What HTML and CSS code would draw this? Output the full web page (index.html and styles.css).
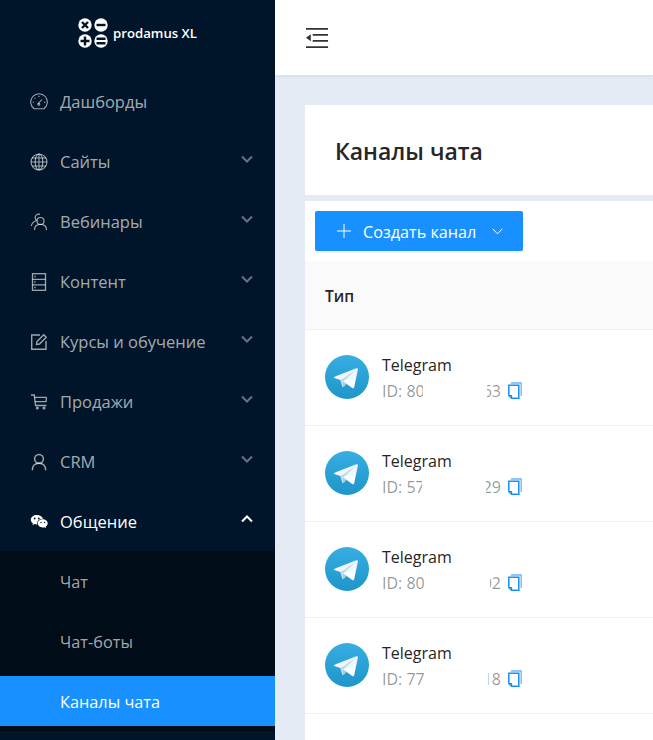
FILE: index.html
```html
<!DOCTYPE html>
<html lang="ru">
<head>
<meta charset="utf-8">
<title>Каналы чата</title>
<link rel="stylesheet" href="styles.css">
</head>
<body>
<svg class="defs" width="0" height="0" aria-hidden="true">
  <defs>
    <linearGradient id="tg" x1="0" y1="0" x2="0" y2="1">
      <stop offset="0" stop-color="#37aee2"/>
      <stop offset="1" stop-color="#1e96c8"/>
    </linearGradient>
    <linearGradient id="wing" x1="0.66" y1="0.44" x2="0.85" y2="0.8">
      <stop offset="0" stop-color="#eff7fc"/>
      <stop offset="1" stop-color="#fff"/>
    </linearGradient>
    <symbol id="tg-icon" viewBox="0 0 240 240">
      <circle cx="120" cy="120" r="120" fill="url(#tg)"/>
      <path fill="#c8daea" d="M98 175c-3.9 0-3.2-1.5-4.6-5.200L82 132.200 170 80"/>
      <path fill="#a9c9dd" d="M98 175c3 0 4.300-1.400 6-3l16-15.600-20-12"/>
      <path fill="url(#wing)" d="M100 144.400l48.400 35.800c5.500 3 9.500 1.500 10.900-5.100L179 82.200c2-8.100-3.100-11.700-8.400-9.300L55 117.500c-7.900 3.200-7.800 7.600-1.400 9.500l29.700 9.300L152 93c3.200-2 6.200-.9 3.800 1.300"/>
    </symbol>
    <symbol id="copy" viewBox="0 0 14 17">
      <path fill="none" stroke="#69b4ff" stroke-width="1.300" d="M2.800 1h10.400v13"/>
      <path fill="none" stroke="#1890ff" stroke-width="1.500" d="M.8 3.200h10v13h-7.300L.8 13.500z"/>
      <path fill="none" stroke="#1890ff" stroke-width="1.200" d="M.8 13.500h2.700v2.700"/>
    </symbol>
  </defs>
</svg>
<div class="app">
  <aside class="sider">
    <div class="logo">
      <svg class="logo-mark" viewBox="0 0 30 30" width="30" height="30">
        <g fill="#fff">
          <circle cx="7" cy="7" r="6.700"/><circle cx="23" cy="7" r="6.700"/>
          <circle cx="7" cy="23" r="6.700"/><circle cx="23" cy="23" r="6.700"/>
        </g>
        <g stroke="#001529" stroke-width="2.400" fill="none">
          <path d="M4 4l6 6M10 4l-6 6"/>
          <path d="M18.500 7h9"/>
          <path d="M2.500 23h9M7 18.500v9"/>
          <path d="M18.500 20.800h9M18.500 25.200h9"/>
        </g>
      </svg>
      <span class="logo-text">prodamus XL</span>
    </div>
    <nav class="menu">
      <a class="item">
        <svg class="ico" viewBox="0 0 18 18"><g fill="none" stroke="currentColor" stroke-width="1.100"><path d="M4.200 15.800A8.300 8.300 0 1 1 13.800 15.800z"/><path d="M8 10.800l4-4.300"/><circle cx="8.800" cy="11.300" r="1"/><path d="M2.700 9.300h1.300M9 2.800v1.300M14 9.300h1.300M4.500 4.800l.9.900"/></g></svg>
        <span class="label">Дашборды</span>
      </a>
      <a class="item">
        <svg class="ico" viewBox="0 0 18 18"><g fill="none" stroke="currentColor" stroke-width="1.100"><circle cx="9" cy="9" r="8"/><ellipse cx="9" cy="9" rx="3.800" ry="8"/><path d="M9 1v16M1 9h16M2 5h14M2 13h14"/></g></svg>
        <span class="label">Сайты</span>
        <svg class="arrow" viewBox="0 0 12 8"><path d="M1 1.500l5 5 5-5"/></svg>
      </a>
      <a class="item">
        <svg class="ico" viewBox="0 0 18 18"><g fill="none" stroke="currentColor" stroke-width="1.200"><circle cx="10.500" cy="8" r="3.500"/><path d="M4.500 17c0-3.500 2.300-5.700 6-5.700s6 2.200 6 5.700"/><path d="M10 1.300C7 .7 5 2.300 5.200 4.800c.1 1.200.6 2.100 1.300 2.700C3.700 8.400 1.800 10.300 1.300 13"/></g></svg>
        <span class="label">Вебинары</span>
        <svg class="arrow" viewBox="0 0 12 8"><path d="M1 1.500l5 5 5-5"/></svg>
      </a>
      <a class="item">
        <svg class="ico" viewBox="0 0 18 18"><g fill="none" stroke="currentColor" stroke-width="1.300"><rect x="2.500" y=".7" width="13" height="16.600"/><path d="M2.500 6.300h13M2.500 11.800h13"/><path d="M4.300 3.500h1.300M4.300 9h1.300M4.300 14.500h1.300"/></g></svg>
        <span class="label">Контент</span>
        <svg class="arrow" viewBox="0 0 12 8"><path d="M1 1.500l5 5 5-5"/></svg>
      </a>
      <a class="item">
        <svg class="ico" viewBox="0 0 18 18"><g fill="none" stroke="currentColor" stroke-width="1.400"><path d="M10 2H1.700v14.300H16V8"/><path d="M6.500 11.500l.5-3L13.700 1.800l2.500 2.500L9.500 11z"/></g></svg>
        <span class="label">Курсы и обучение</span>
        <svg class="arrow" viewBox="0 0 12 8"><path d="M1 1.500l5 5 5-5"/></svg>
      </a>
      <a class="item">
        <svg class="ico" viewBox="0 0 18 18"><g fill="none" stroke="currentColor" stroke-width="1.300"><path d="M1 2h3.300l1.200 10.500h11"/><path d="M4.500 4.300h12M4.900 8.700h11.100l.5-4.400"/></g><circle cx="7.300" cy="15" r="1.500" fill="currentColor"/><circle cx="14" cy="15" r="1.500" fill="currentColor"/></svg>
        <span class="label">Продажи</span>
        <svg class="arrow" viewBox="0 0 12 8"><path d="M1 1.500l5 5 5-5"/></svg>
      </a>
      <a class="item">
        <svg class="ico" viewBox="0 0 18 18"><g fill="none" stroke="currentColor" stroke-width="1.500"><circle cx="9" cy="5.800" r="4.400"/><path d="M2.300 17.300c0-4.300 2.600-7.100 6.700-7.100s6.700 2.800 6.700 7.100"/></g></svg>
        <span class="label">CRM</span>
        <svg class="arrow" viewBox="0 0 12 8"><path d="M1 1.500l5 5 5-5"/></svg>
      </a>
      <a class="item item-open">
        <svg class="ico" viewBox="0 0 18 18"><path fill="currentColor" d="M6.800 2C3.500 2 .8 4.100.8 6.800c0 1.500.8 2.800 2.200 3.700L2.400 12.300l2.200-1.200c.7.200 1.400.3 2.200.3h.5c-.1-.4-.2-.7-.2-1.100 0-2.600 2.500-4.600 5.600-4.600h.5C12.200 3.600 9.700 2 6.800 2z"/><path fill="currentColor" d="M17.700 10.300c0-2.300-2.300-4.100-5-4.100s-5 1.800-5 4.100 2.300 4.100 5 4.100c.6 0 1.100-.1 1.700-.2l1.700 1-.5-1.500c1.200-.8 2.100-2 2.100-3.400z"/><g fill="#001529"><circle cx="4.700" cy="5.500" r=".9"/><circle cx="8.800" cy="5.500" r=".9"/><circle cx="11" cy="9.500" r=".7"/><circle cx="14.500" cy="9.500" r=".7"/></g></svg>
        <span class="label">Общение</span>
        <svg class="arrow" viewBox="0 0 12 8"><path d="M1 6.500l5-5 5 5"/></svg>
      </a>
      <div class="submenu">
        <a class="sub-item">Чат</a>
        <a class="sub-item">Чат-боты</a>
        <a class="sub-item sub-selected">Каналы чата</a>
      </div>
    </nav>
  </aside>
  <div class="main">
    <header class="topbar">
      <svg class="fold" viewBox="0 0 24 22" width="24" height="22">
        <path d="M0 1.500h23M7 7.700h16M7 14h16M0 20.500h23" fill="none" stroke="#333" stroke-width="2"/>
        <path d="M0 10.800l5-3.600v7.200z" fill="#333"/>
      </svg>
    </header>
    <div class="content">
      <section class="title-card"><h1 class="title">Каналы чата</h1></section>
      <section class="table-card">
        <div class="toolbar">
          <button class="create-btn" type="button">
            <svg class="btn-plus" viewBox="0 0 14 14"><path d="M7 0v14M0 7h14"/></svg>
            <span>Создать канал</span>
            <svg class="btn-caret" viewBox="0 0 11 7"><path d="M.7.8L5.500 5.800 10.300.8"/></svg>
          </button>
        </div>
        <div class="thead">Тип</div>
        <div class="row">
          <svg class="tg"><use href="#tg-icon"/></svg>
          <div class="row-text">
            <div class="row-name">Telegram</div>
            <div class="row-id"><span>ID: 80</span><span class="id-tail">63</span><svg class="copy"><use href="#copy"/></svg><span class="id-mask mask-a"></span></div>
          </div>
        </div>
        <div class="row">
          <svg class="tg"><use href="#tg-icon"/></svg>
          <div class="row-text">
            <div class="row-name">Telegram</div>
            <div class="row-id"><span>ID: 57</span><span class="id-tail">29</span><svg class="copy"><use href="#copy"/></svg><span class="id-mask mask-b"></span></div>
          </div>
        </div>
        <div class="row">
          <svg class="tg"><use href="#tg-icon"/></svg>
          <div class="row-text">
            <div class="row-name">Telegram</div>
            <div class="row-id"><span>ID: 80</span><span class="id-tail">02</span><svg class="copy"><use href="#copy"/></svg><span class="id-mask mask-c"></span></div>
          </div>
        </div>
        <div class="row">
          <svg class="tg"><use href="#tg-icon"/></svg>
          <div class="row-text">
            <div class="row-name">Telegram</div>
            <div class="row-id"><span>ID: 77</span><span class="id-tail">18</span><svg class="copy"><use href="#copy"/></svg><span class="id-mask mask-d"></span></div>
          </div>
        </div>
      </section>
    </div>
  </div>
</div>
</body>
</html>
```
FILE: styles.css
```css
* { box-sizing: border-box; }
html, body { margin: 0; height: 100%; overflow: hidden; }
body { font-family: "Open Sans", "Noto Sans", sans-serif; font-size: 16px; color: #262626; }
.defs { position: absolute; }
.app { display: flex; height: 740px; width: 653px; overflow: hidden; }

.sider { width: 275px; flex: none; background: #001529; color: rgba(255,255,255,.65); }
.logo { height: 71px; display: flex; align-items: center; justify-content: center; gap: 5px; padding: 0 0 5px 0; }
.logo-mark { display: block; }
.logo-text { color: #fff; font-family: "Open Sans", sans-serif; font-size: 13.200px; font-weight: 600; white-space: nowrap; }

.item { height: 60px; display: flex; align-items: center; padding: 1px 20px 0 30px; font-size: 16.500px; }
.ico { width: 18px; height: 18px; flex: none; margin-right: 12px; color: rgba(255,255,255,.62); }
.label { flex: 1; }
.arrow { width: 12px; height: 8px; flex: none; margin: -5px 2px 0 0; fill: none; stroke: rgba(255,255,255,.4); stroke-width: 2; }
.item-open { color: #fff; }
.item-open .ico { color: #fff; }
.item-open .arrow { stroke: #fff; }

.submenu { background: #000c17; padding: 5px 0; display: flex; flex-direction: column; gap: 10px; }
.sub-item { height: 50px; display: flex; align-items: center; padding: 2px 0 0 60px; font-size: 16.300px; }
.sub-selected { background: #1890ff; color: #fff; }

.main { flex: 1; min-width: 0; display: flex; flex-direction: column; background: #e4ebf5; }
.topbar { height: 75px; flex: none; background: #fff; box-shadow: 0 1px 4px rgba(0,21,41,.08); display: flex; align-items: center; padding: 0 0 0 31px; }
.fold { display: block; width: 23px; height: 22px; }
.content { flex: 1; padding: 30px 0 0 30px; display: flex; flex-direction: column; gap: 6px; }
.title-card { height: 90px; background: #fff; display: flex; align-items: center; padding: 2px 0 0 30px; }
.title { margin: 0; font-size: 23px; font-weight: 600; line-height: 1; color: #262626; }
.table-card { flex: 1; background: #fff; }
.toolbar { height: 60px; padding: 10px; }
.create-btn { width: 208px; height: 40px; border: 0; border-radius: 2px; background: #1890ff; color: #fff; font: inherit; font-size: 16.200px; display: flex; align-items: center; padding: 1px 0 0 22px; box-shadow: 0 2px 0 rgba(0,0,0,.045); }
.btn-plus { width: 14px; height: 14px; fill: none; stroke: #fff; stroke-width: 1; margin: -1px 12px 0 0; flex: none; }
.btn-caret { width: 11px; height: 7px; fill: none; stroke: #fff; stroke-width: 1; margin-left: 16px; flex: none; }
.thead { height: 69px; background: #fafafa; border-bottom: 1px solid #f0f0f0; display: flex; align-items: center; padding: 2px 0 0 20px; font-weight: 600; font-size: 15.500px; color: #262626; }
.row { height: 96px; border-bottom: 1px solid #f0f0f0; display: flex; align-items: center; padding: 0 0 0 20px; }
.tg { width: 44px; height: 44px; flex: none; margin: -2px 13px 0 0; }
.row-text { line-height: 26px; }
.row-name { color: #262626; font-size: 16px; }
.row-id { position: relative; display: flex; align-items: center; color: rgba(0,0,0,.42); font-size: 16px; width: 140px; }
.id-tail { margin-left: auto; }
.copy { width: 14px; height: 17px; margin: 0 0 0 7px; flex: none; }
.id-mask { position: absolute; top: 0; bottom: 0; background: #fff; }
.mask-a { left: 41px; right: 35px; }
.mask-b { left: 40px; right: 36px; }
.mask-c { left: 42px; right: 32px; }
.mask-d { left: 43px; right: 34px; }
```
